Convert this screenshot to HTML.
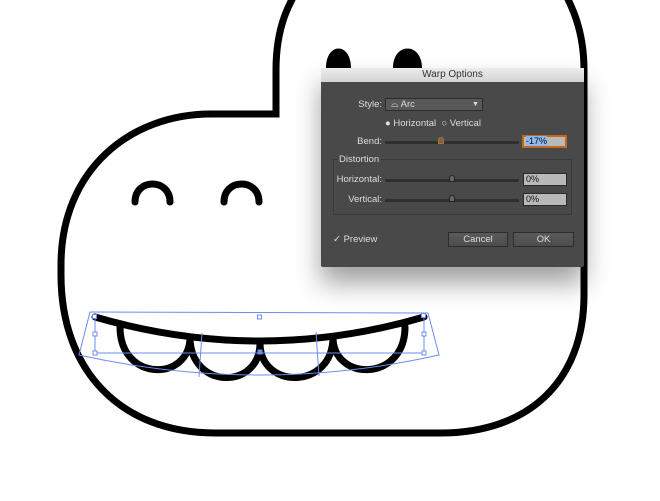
<!DOCTYPE html>
<html><head><meta charset="utf-8"><style>
html,body{margin:0;padding:0;width:660px;height:501px;overflow:hidden;background:#fff;font-family:"Liberation Sans",sans-serif;}
svg{position:absolute;left:0;top:0}
.dlg{position:absolute;left:321px;top:68px;width:263px;height:199px;background:#494949;box-shadow:0 16px 26px rgba(0,0,0,0.38);border-radius:2px}
.tb{position:absolute;left:0;top:0;width:263px;height:14px;background:linear-gradient(#ececec,#d4d4d4);font-size:10px;color:#333;text-align:center;line-height:14px}
.t{position:absolute;font-size:9.5px;color:#ddd;white-space:nowrap;line-height:11px}
.r{text-align:right}
.sl{position:absolute;height:3px;background:#2f2f2f;border-radius:1px}
.fld{position:absolute;background:#b9b9b9;border:1px solid #2a2a2a;font-size:9px;color:#111;line-height:11px;padding-left:2px;box-sizing:border-box}
.btn{position:absolute;height:15px;background:linear-gradient(#5a5a5a,#4c4c4c);border:1px solid #2c2c2c;box-sizing:border-box;color:#ddd;font-size:9.5px;text-align:center;line-height:13px}
.th{position:absolute;width:6px;height:7px;background:#666;border:1px solid #222;border-radius:3px 3px 0 0;box-sizing:border-box}
</style></head><body>
<svg width="660" height="501" viewBox="0 0 660 501">
<g fill="none" stroke="#000" stroke-width="7" stroke-linecap="round">
<path d="M276,114 V70 C276,25 290,0 304,-20 L558,-20 C572,5 584,30 584,70 V295 C584,380 530,433 440,433 H215 C120,433 61,370 61,275 V265 C61,170 130,114 211,114 Z" stroke-linecap="butt"/>
<path d="M135,202 C135,178 170,178 170,202"/>
<path d="M224,202 C224,178 259,178 259,202"/>
<path d="M95,317 Q260,365 424,317"/>
<path d="M120,327 C120,382 190,382 190,337"/>
<path d="M190,337 C190,390 260,390 260,343"/>
<path d="M260,343 C260,390 333,390 333,337"/>
<path d="M333,337 C333,382 405,382 405,327"/>
</g>
<path d="M326,68 C326,42 351,42 351,68 Z M393,68 C393,42 422,42 422,68 Z" fill="#000"/>
<g fill="none" stroke="#6b8cf0" stroke-width="1">
<path d="M90,312 L428,313"/>
<path d="M95,353 L424,353"/>
<path d="M95,317 V353 M424,316 V353"/>
<path d="M90,312 L79,355 Q260,395 439,355 L428,313"/>
<path d="M202,333 L199,377 M316,332 L319,376"/>
</g>
<g fill="#fff" stroke="#6b8cf0" stroke-width="1">
<rect x="92.5" y="314.5" width="4" height="4"/><rect x="421.5" y="313.5" width="4" height="4"/>
<rect x="257.5" y="315" width="4" height="4"/><rect x="93" y="332" width="4" height="4"/><rect x="422" y="332" width="4" height="4"/>
<rect x="93" y="351" width="4" height="4"/><rect x="422" y="351" width="4" height="4"/><rect x="258" y="350" width="4" height="4" fill="#6b8cf0"/>
</g>
</svg>
<div class="dlg">
<div class="tb">Warp Options</div>
<div class="t r" style="left:10px;top:31px;width:51px">Style:</div>
<div style="position:absolute;left:64px;top:30px;width:98px;height:13px;background:#585858;border:1px solid #2c2c2c;box-sizing:border-box"></div>
<div class="t" style="left:70px;top:31px">⌓ Arc</div>
<div class="t" style="left:151px;top:31px;font-size:7px">▼</div>
<div class="t" style="left:64px;top:50px">● Horizontal &nbsp;○ Vertical</div>
<div class="t r" style="left:10px;top:68px;width:51px">Bend:</div>
<div class="sl" style="left:64px;top:73px;width:134px"></div>
<div class="th" style="left:117px;top:69px;border-color:#c06a20"></div>
<div class="fld" style="left:201px;top:67px;width:45px;height:13px;border:2px solid #c06a20;line-height:9px"><span style="background:#8fb8f0">-17%</span></div>
<div style="position:absolute;left:12px;top:91px;width:239px;height:56px;border:1px solid #3a3a3a;box-sizing:border-box"></div>
<div class="t" style="left:16px;top:86px;background:#494949;padding:0 2px">Distortion</div>
<div class="t r" style="left:6px;top:106px;width:55px">Horizontal:</div>
<div class="sl" style="left:64px;top:111px;width:134px"></div>
<div class="th" style="left:128px;top:107px"></div>
<div class="fld" style="left:202px;top:105px;width:44px;height:13px">0%</div>
<div class="t r" style="left:6px;top:126px;width:55px">Vertical:</div>
<div class="sl" style="left:64px;top:131px;width:134px"></div>
<div class="th" style="left:128px;top:127px"></div>
<div class="fld" style="left:202px;top:125px;width:44px;height:13px">0%</div>
<div class="t" style="left:12px;top:166px">✓ Preview</div>
<div class="btn" style="left:127px;top:164px;width:60px">Cancel</div>
<div class="btn" style="left:192px;top:164px;width:61px">OK</div>
</div>
</body></html>
